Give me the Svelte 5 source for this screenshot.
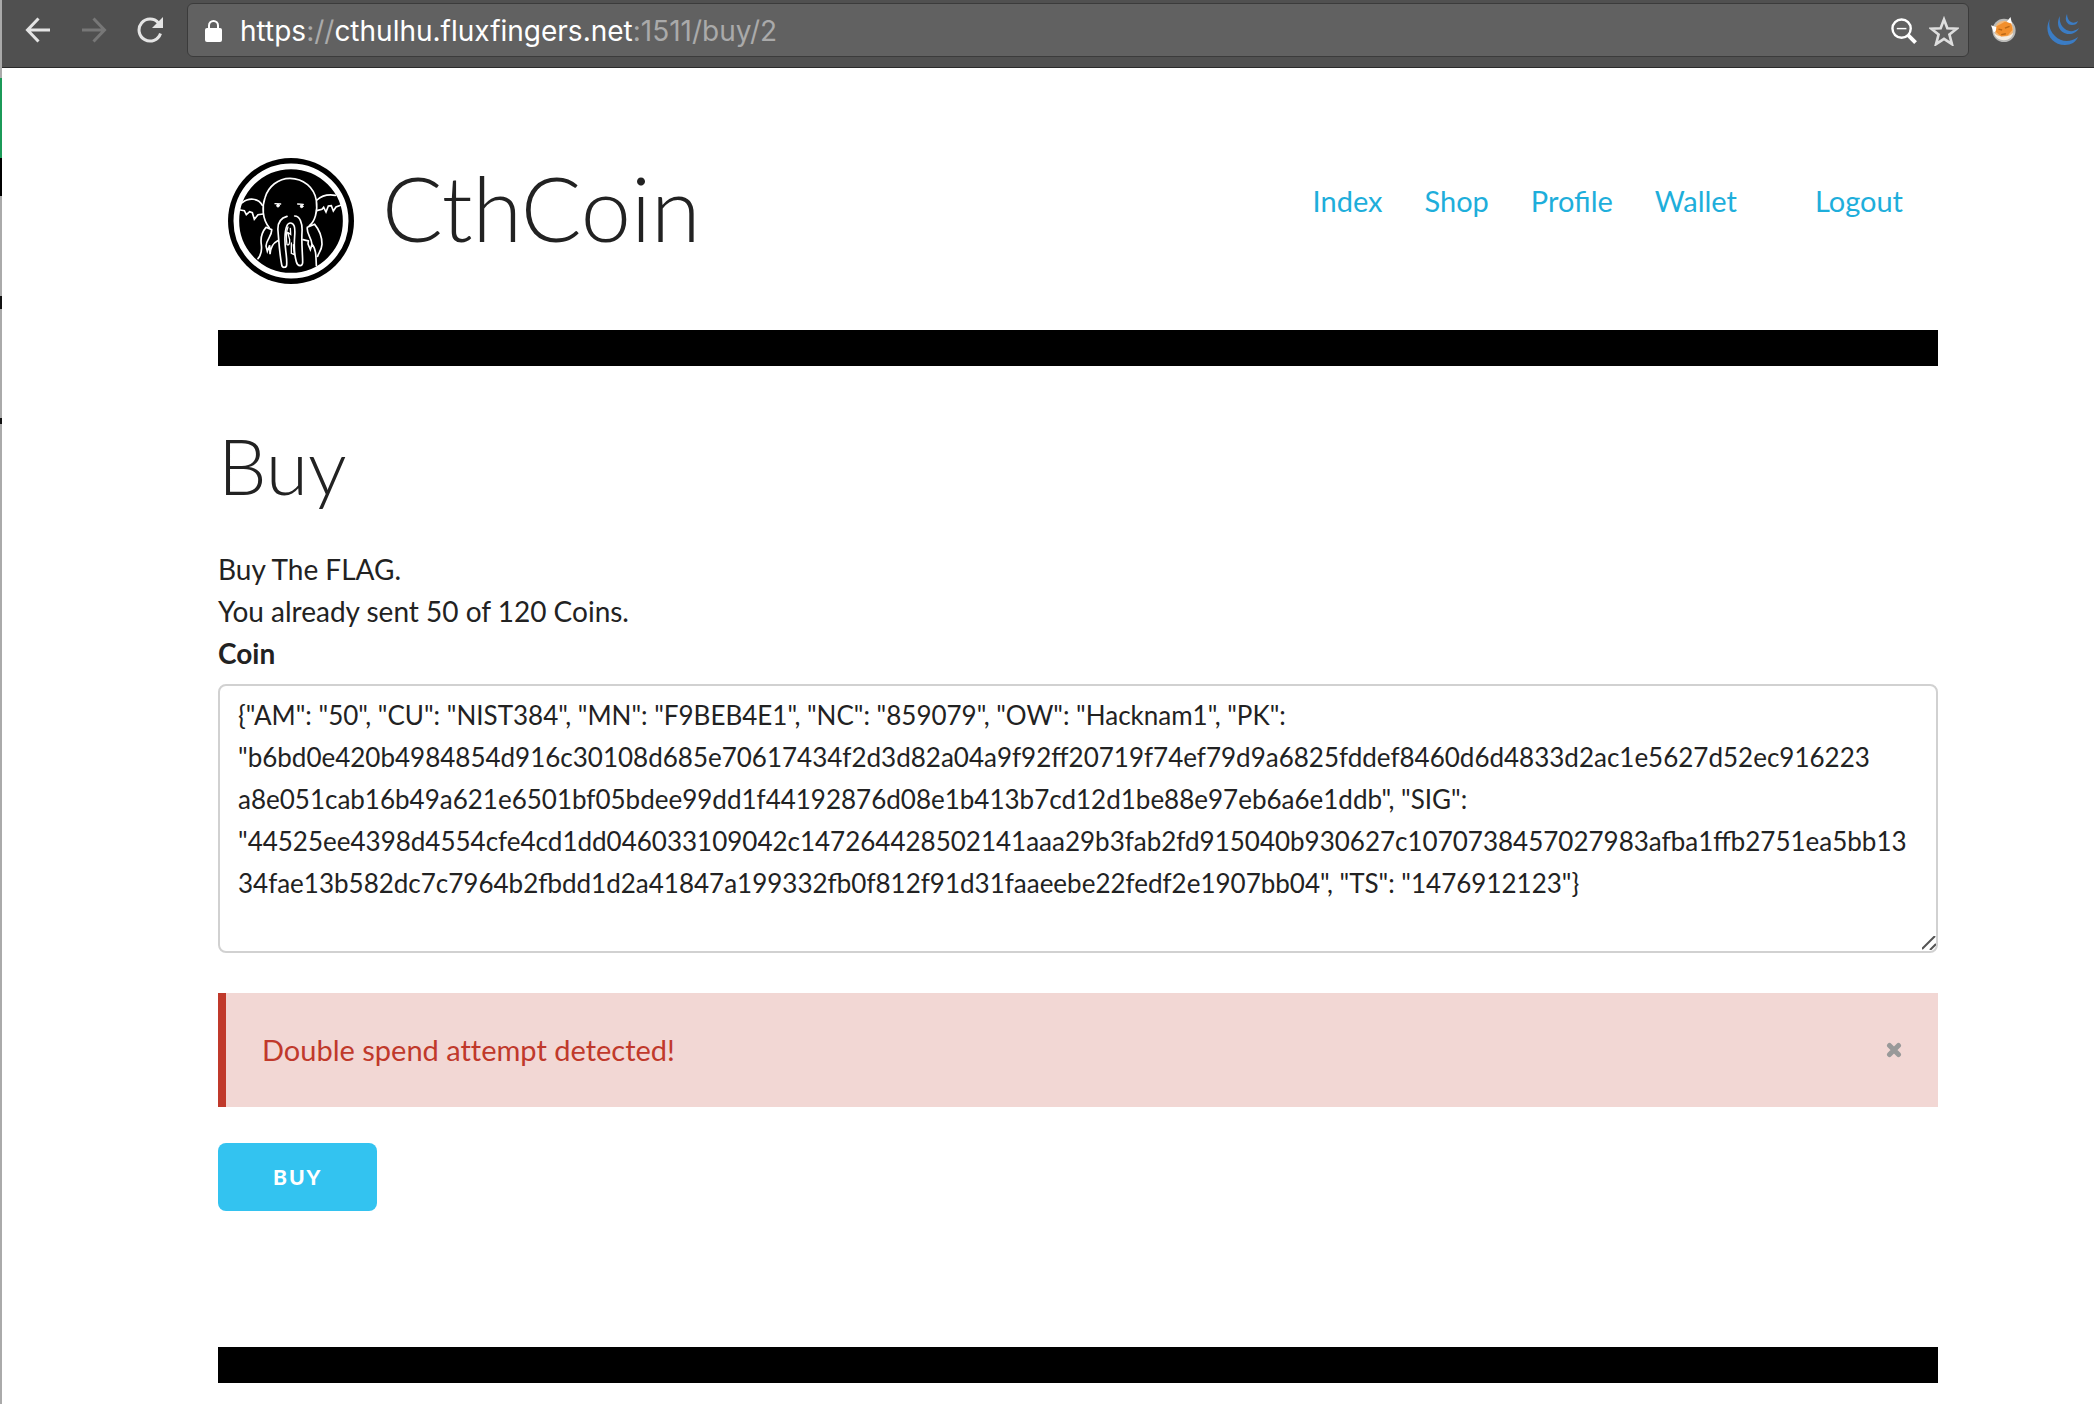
<script lang="ts">
  const links = ["Index", "Shop", "Profile", "Wallet"];

  const initialCoin = [
    '{"AM": "50", "CU": "NIST384", "MN": "F9BEB4E1", "NC": "859079", "OW": "Hacknam1", "PK":',
    '"b6bd0e420b4984854d916c30108d685e70617434f2d3d82a04a9f92ff20719f74ef79d9a6825fddef8460d6d4833d2ac1e5627d52ec916223',
    'a8e051cab16b49a621e6501bf05bdee99dd1f44192876d08e1b413b7cd12d1be88e97eb6a6e1ddb", "SIG":',
    '"44525ee4398d4554cfe4cd1dd046033109042c147264428502141aaa29b3fab2fd915040b930627c1070738457027983afba1ffb2751ea5bb13',
    '34fae13b582dc7c7964b2fbdd1d2a41847a199332fb0f812f91d31faaeebe22fedf2e1907bb04", "TS": "1476912123"}',
  ].join("\n");

  let coin = $state(initialCoin);
  let alertOpen = $state(true);
</script>

<div class="window">
  <div class="edge"></div>
  <div class="browser">
    <div class="toolbar">
      <button class="tool" aria-label="Back">
        <svg viewBox="0 0 26 26" fill="none" stroke="#e4e4e4" stroke-width="3">
          <path d="M25 13H3M13.500 1.500L2.500 13l11 11.500" />
        </svg>
      </button>
      <button class="tool" aria-label="Forward" disabled>
        <svg viewBox="0 0 26 26" fill="none" stroke="#777" stroke-width="3">
          <path d="M1 13h22M12.500 1.500l11 11.500-11 11.500" />
        </svg>
      </button>
      <button class="tool" aria-label="Reload">
        <svg viewBox="0 0 26 26" fill="none" stroke="#e4e4e4" stroke-width="3">
          <path d="M23.500 16.500A11 11 0 1 1 21.500 6" />
          <path d="M26 0v11H15z" fill="#e4e4e4" stroke="none" />
        </svg>
      </button>
      <div class="address">
        <svg class="lock" viewBox="0 0 17 22">
          <rect y="8" width="17" height="14" rx="2" fill="#fff" />
          <path d="M4 9V5.500a4.500 4.500 0 0 1 9 0V9" fill="none" stroke="#fff" stroke-width="2" />
        </svg>
        <div class="url">
          https<span>://</span>cthulhu.fluxfingers.net<span>:1511/buy/2</span>
        </div>
        <button class="tool" aria-label="Zoom">
          <svg viewBox="0 0 27 27" fill="none" stroke="#fff">
            <circle cx="11" cy="11" r="9.500" stroke-width="2.500" />
            <path d="M6 11h10" stroke-width="1.500" />
            <path d="M17.500 17.500l8 8" stroke-width="4" />
          </svg>
        </button>
        <button class="tool star" aria-label="Bookmark">
          <svg viewBox="2 1 26 26" fill="none" stroke="#dedede" stroke-width="2.300">
            <path d="M15 4l2.900 7.600 8.100.4-6.300 5.100 2.200 8.300L15 20.800l-6.900 4.600 2.200-8.300L4 12l8.100-.4z" />
          </svg>
        </button>
      </div>
      <button class="tool" aria-label="Fox extension">
        <svg viewBox="0 0 28 28">
          <circle cx="14" cy="14.500" r="12.500" fill="#b9b9b7" />
          <circle cx="14" cy="14" r="10" fill="#f2b878" />
          <path d="M0 9l9 3-6 5zM17 5l4-5 2 9z" fill="#fff" />
          <path d="M3 17c2 6 6 8 11 8s9-3 10-8c-3 3-6 4-10 4-5 0-8-1-11-4z" fill="#f3ece2" />
          <path d="M6 10l9-5 7 2 1 7-5 6-7 1-6-5z" fill="#f28f2c" />
          <path d="M8 13l4 1M15 12l5-2M11 19l5-1" stroke="#b96716" stroke-width="1.500" />
        </svg>
      </button>
      <button class="tool jquery" aria-label="jQuery extension">
        <svg viewBox="0 0 32 32" fill="#3b7cc4">
          <path d="M3 5C-4 17 4 31 18 31c6 0 11-3 13-8-8 6-17 5-23-1C3 17 1 11 3 5z" />
          <path d="M13 2c-5 8 0 18 9 18 4 0 8-2 10-6-5 4-10 4-14 1s-6-8-5-13z" />
          <path d="M20 0c-3 6 0 11 5 11 3 0 5-1 6-4-3 2-5 2-7 1s-4-4-4-8z" />
        </svg>
      </button>
    </div>

    <div class="page">
      <header>
        <a class="brand" href="#index">
          <svg class="logo" viewBox="54 54 378 378" fill="none" stroke="#fff" stroke-width="5" stroke-linecap="round">
            <circle cx="243" cy="243" r="189" fill="#000" stroke="none" />
            <circle cx="243" cy="243" r="164" stroke-width="17" />
            <path d="M178 263c-22-26-22-65-13-90 10-34 40-58 75-58 41 0 73 29 79 66 5 33-5 65-21 76" />
            <path d="M97 188c18-15 48-15 60 8M321 180c14-13 36-17 55-14" />
            <path d="M91 210l12 2 6 12 10-9 8 3 6 20 11-14 15-2M320 212l16-4 5-6 7 14 7-18 9-1 6 16 8-12 16-6" />
            <path d="M195 191l17 1M263 192l17 1" stroke-width="4" />
            <circle cx="204" cy="197" r="4" fill="#fff" stroke-width="3" />
            <circle cx="275" cy="199" r="4" fill="#fff" stroke-width="3" />
            <path d="M168 262c-12 14-17 33-14 52 2 16 2 28-10 42M168 262l17 7c2 18-16 29-17 49l4 16 7-18 1 27c1-20 9-34 23-41" />
            <path d="M292 262l22-9c12 14 22 36 22 60-1 18-11 27-13 36M292 262c-3 20 12 28 14 51l-5 16-7-17 1-9-16-4M306 313c12 12 12 35 13 64" />
            <path d="M231 229c-22 6-29 22-27 44 3 34 4 64 11 101 1 11 15 10 15 0 2-27-7-51-5-83 1-27 5-42 16-42 12 0 15 13 13 39-2 25-2 52 5 77 4 15 19 16 19 2 0-25-4-55-2-90 2-29-7-49-22-49" />
            <path d="M234 261c-8 18-5 38-3 53 5 3 9-2 8-15l-6-22 9 6-1-18M244 309v31l9 4-3-30" stroke-width="4" />
          </svg>
          <span class="title">CthCoin</span>
        </a>
        <nav>
          {#each links as link}
            <a href="#{link.toLowerCase()}">{link}</a>
          {/each}
          <a class="logout" href="#logout">Logout</a>
        </nav>
      </header>
      <div class="bar"></div>

      <main>
        <h1>Buy</h1>
        <p>Buy The FLAG.<br />You already sent 50 of 120 Coins.</p>
        <form onsubmit={(e) => e.preventDefault()}>
          <label for="coin">Coin</label>
          <div class="field">
            <textarea id="coin" rows="6" spellcheck="false" bind:value={coin}></textarea>
            <svg class="grip" viewBox="0 0 14 14" stroke="#555" stroke-width="2">
              <path d="M0 13L13 0M8 14l6-6" />
            </svg>
          </div>
          {#if alertOpen}
            <div class="alert" role="alert">
              <span>Double spend attempt detected!</span>
              <button type="button" class="close" aria-label="Close" onclick={() => (alertOpen = false)}>
                <svg viewBox="0 0 16 16" stroke="#999" stroke-width="5" stroke-linecap="round">
                  <path d="M3.500 3.500l9 9M12.500 3.500l-9 9" />
                </svg>
              </button>
            </div>
          {/if}
          <button class="submit">Buy</button>
        </form>
      </main>
      <div class="bar"></div>
    </div>
  </div>
</div>

<style>
  :global(body) {
    margin: 0;
    background: #fff;
  }
  .window {
    display: flex;
    min-height: 100vh;
    color: #222;
    font: 28px/42px Lato, "Open Sans", sans-serif;
  }
  /* sliver of the window behind */
  .edge {
    flex: 0 0 2px;
    background: linear-gradient(
      #aaa 78px,
      #1b9a58 78px 158px,
      #000 158px 196px,
      #aaa 196px 296px,
      #111 296px 309px,
      #aaa 309px 418px,
      #111 418px 424px,
      #aaa 424px
    );
  }
  .browser {
    flex: 1;
    min-width: 0;
  }
  button {
    border: 0;
    padding: 0;
    background: none;
    cursor: pointer;
  }
  svg {
    display: block;
  }

  .toolbar {
    display: flex;
    align-items: center;
    gap: 30px;
    box-sizing: border-box;
    height: 68px;
    padding: 0 15px 7px 23px;
    background: #505050;
    border-bottom: 1px solid #2a2a2a;
  }
  .tool {
    flex: none;
    width: 26px;
  }
  .star {
    width: 30px;
  }
  .jquery {
    width: 32px;
  }
  .address {
    flex: 1;
    display: flex;
    align-items: center;
    gap: 12px;
    box-sizing: border-box;
    height: 54px;
    margin-right: -8px;
    margin-left: -6px;
    padding: 1px 9px 0 17px;
    background: #616161;
    border: 1px solid #3b3b3b;
    border-radius: 6px;
  }
  .lock {
    width: 17px;
    height: 22px;
  }
  .url {
    flex: 1;
    margin-left: 6px;
    color: #fff;
    font-family: Inter, Roboto, sans-serif;
  }
  .url span {
    color: #aaa;
  }

  .page {
    padding: 0 156px 20px 216px;
  }
  header {
    display: flex;
    justify-content: space-between;
    box-sizing: border-box;
    height: 262px;
    padding: 90px 35px 0 10px;
  }
  .brand {
    display: flex;
    align-items: flex-start;
    gap: 28px;
    color: #222;
  }
  .logo {
    width: 126px;
    height: 126px;
  }
  .title {
    font-size: 90px;
    font-weight: 300;
    line-height: 98px;
  }
  a {
    color: #1eaedb;
    text-decoration: none;
  }
  nav {
    display: flex;
    gap: 42px;
    padding-top: 22px;
    font-size: 29px;
  }
  .logout {
    margin-left: 36px;
  }
  .bar {
    height: 36px;
    background: #000;
  }

  main {
    padding: 54px 0 136px;
  }
  h1 {
    margin: 0 0 38px;
    font-size: 77px;
    font-weight: 300;
    line-height: 90px;
  }
  p {
    margin: 0;
  }
  label {
    display: block;
    margin-bottom: 10px;
    font-weight: 700;
  }
  .field {
    position: relative;
    margin-bottom: 40px;
  }
  textarea {
    display: block;
    box-sizing: border-box;
    width: 100%;
    height: 269px;
    margin: 0;
    padding: 8px 18px;
    border: 2px solid #d1d1d1;
    border-radius: 8px;
    outline: 0;
    background: #fff;
    color: #222;
    font: 26px/42px Lato, "Open Sans", sans-serif;
    white-space: pre;
    overflow: hidden;
    resize: vertical;
  }
  textarea::-webkit-resizer {
    display: none;
  }
  .grip {
    position: absolute;
    right: 2px;
    bottom: 3px;
    width: 14px;
    height: 14px;
    pointer-events: none;
  }
  .alert {
    display: flex;
    justify-content: space-between;
    align-items: center;
    margin-bottom: 36px;
    padding: 36px;
    border-left: 8px solid #c0392b;
    background: #f2d7d4;
    color: #c0392b;
    font-size: 29px;
    font-variant-ligatures: none;
  }
  .close svg {
    width: 16px;
    height: 16px;
  }
  .submit {
    display: block;
    height: 68px;
    padding: 0 55px;
    border-radius: 8px;
    background: #33c3f0;
    color: #fff;
    font: 900 21px/68px Lato, "Open Sans", sans-serif;
    letter-spacing: 2px;
    text-transform: uppercase;
  }
</style>
